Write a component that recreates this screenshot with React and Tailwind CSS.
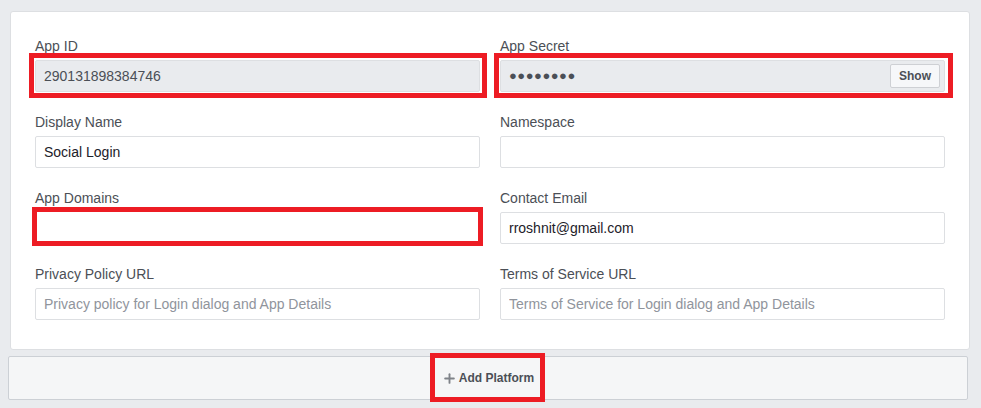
import { Plus } from 'lucide-react'

// red annotation frame drawn over a field
function Mark({ className }) {
    return <div className={`pointer-events-none absolute border-[5px] border-[#ed1c24] ${className}`} />
}

function Field({ label, value, placeholder, disabled, mark, children }) {
    return (
        <div className="flex flex-col">
            <label className="h-[20px] text-[14px] leading-[20px] text-[#4b4f56] mb-[4px]">{label}</label>
            <div className="relative">
                {children ? children : (
                    <input
                        readOnly
                        value={value || ''}
                        placeholder={placeholder}
                        className={`w-full h-[32px] px-[8px] text-[14px] border border-[#dddfe2] rounded-[2px] outline-none ${disabled ? 'bg-[#e9ebee] text-[#4b4f56]' : 'bg-white text-[#1d2129]'} placeholder:text-[#90949c]`}
                    />
                )}
                {mark}
            </div>
        </div>
    )
}

export default function App() {
    return (
        <div className="w-[981px] h-[408px] bg-[#e9ebee] pt-[11px] overflow-hidden" style={{ fontFamily: '"Liberation Sans", Arial, sans-serif' }}>
            {/* Basic settings card */}
            <div className="ml-[10px] w-[960px] h-[339px] bg-white border border-[#dddfe2] rounded-[3px] px-[24px] pt-[24px]">
                <div className="grid grid-cols-2 gap-x-[20px] gap-y-[20px]">
                    <Field label="App ID" value="290131898384746" disabled
                           mark={<Mark className="-left-[6px] -top-[7px] -right-[7px] -bottom-[6px]" />} />
                    <Field label="App Secret"
                           mark={<Mark className="-left-[6px] -top-[7px] -right-[8px] -bottom-[6px]" />}>
                        <div className="w-full h-[32px] pl-[8px] pr-[4px] flex items-center justify-between bg-[#e9ebee] border border-[#dddfe2] rounded-[2px]">
                            <span className="text-[13px] tracking-[0.5px] text-[#4b4f56]">●●●●●●●●</span>
                            <button className="h-[24px] px-[8px] text-[12px] font-bold text-[#4b4f56] bg-[#f6f7f9] border border-[#ced0d4] rounded-[2px]">Show</button>
                        </div>
                    </Field>
                    <Field label="Display Name" value="Social Login" />
                    <Field label="Namespace" />
                    <Field label="App Domains"
                           mark={<Mark className="-left-[3px] -top-[5px] -right-[3px] -bottom-[2px] bg-white" />} />
                    <Field label="Contact Email" value="rroshnit@gmail.com" />
                    <Field label="Privacy Policy URL" placeholder="Privacy policy for Login dialog and App Details" />
                    <Field label="Terms of Service URL" placeholder="Terms of Service for Login dialog and App Details" />
                </div>
            </div>

            {/* Add platform bar */}
            <div className="mt-[6px] ml-[8px] w-[960px] h-[44px] bg-[#f5f6f7] border border-[#ccd0d5] rounded-[2px] flex items-center justify-center">
                <div className="relative flex items-center gap-[2px] text-[12px] font-bold text-[#4b4f56]">
                    <Plus size={15} strokeWidth={3} className="text-[#7f8389]" />
                    <span>Add Platform</span>
                    <Mark className="-left-[12px] -top-[16px] -right-[11px] -bottom-[15px]" />
                </div>
            </div>
        </div>
    )
}
